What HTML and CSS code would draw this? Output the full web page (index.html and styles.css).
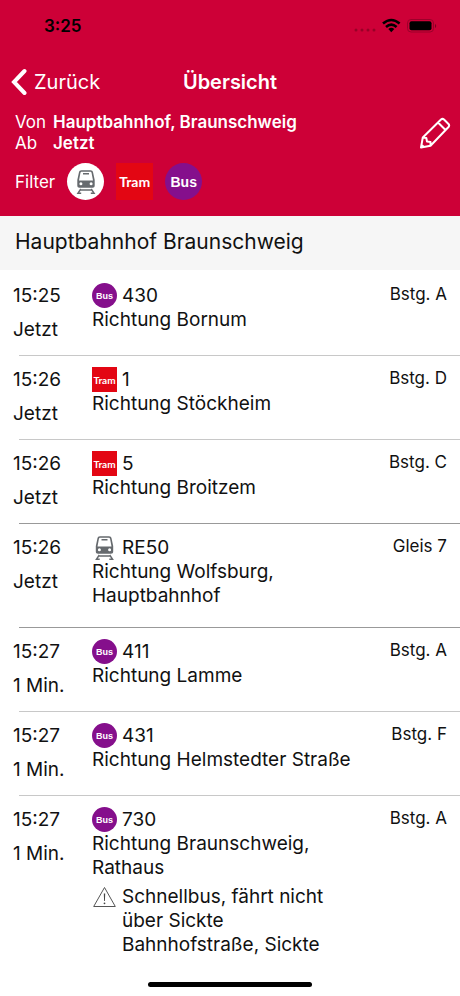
FILE: index.html
```html
<!DOCTYPE html>
<html lang="de">
<head>
<meta charset="utf-8">
<meta name="viewport" content="width=device-width, initial-scale=1">
<title>Übersicht</title>
<link rel="stylesheet" href="styles.css">
</head>
<body>
<svg class="defs" aria-hidden="true">
  <symbol id="train" viewBox="0 0 24 24">
    <path fill="#666a6e" fill-rule="evenodd" d="M7.500.3h9c1.500 0 2.300.8 2.600 2.200L20.700 10v5.500c0 1.500-.8 2.200-2.200 2.200h-13c-1.400 0-2.200-.7-2.200-2.200V10L4.900 2.500C5.200 1.100 6 .3 7.500.3zM7.900 1.700c-.9 0-1.300.4-1.500 1.300L5 10.600h14L17.600 3c-.2-.9-.6-1.300-1.500-1.300zM6.900 12.300a1.500 1.500 0 1 0 0 3 1.500 1.500 0 0 0 0-3zm10.200 0a1.500 1.500 0 1 0 0 3 1.500 1.500 0 0 0 0-3z"/>
    <path fill="none" stroke="#666a6e" stroke-width="1.500" d="M9 3.800h6M6 20h12M6.800 19 4 23.200h3.200M17.200 19l2.800 4.200h-3.200"/>
  </symbol>
</svg>
<header class="top">
  <div class="status">
    <span class="clock">3:25</span>
    <svg class="signal" viewBox="0 0 82 16" aria-hidden="true">
      <g fill="#980027"><circle cx="2" cy="12" r="1.500"/><circle cx="8" cy="12" r="1.500"/><circle cx="14" cy="12" r="1.500"/><circle cx="20" cy="12" r="1.500"/></g>
      <g fill="none" stroke="#000" stroke-width="2.600"><path d="M29 5.500Q37.300-1.500 45.600 5.500M32 8.900Q37.300 4.300 42.600 8.900"/></g>
      <path d="M34.300 10.900q3-2.200 6 0l-3 3.300z"/>
      <rect x="53.500" y="1.500" width="26" height="12.500" rx="3.500" fill="none" stroke="#9c002a"/>
      <rect x="55.500" y="3.300" width="22" height="9" rx="2"/>
      <path d="M81 6v4q1.200-.6 1.200-2T81 6z" fill="#7c0021"/>
    </svg>
  </div>
  <nav class="nav">
    <button class="back" type="button">
      <svg viewBox="0 0 16 28" aria-hidden="true"><path d="M13.500 3 3 14l10.500 11" fill="none" stroke="#fff" stroke-width="4" stroke-linecap="round" stroke-linejoin="miter"/></svg>
      Zurück
    </button>
    <h1>Übersicht</h1>
  </nav>
  <div class="query">
    <dl>
      <dt>Von</dt><dd>Hauptbahnhof, Braunschweig</dd>
      <dt>Ab</dt><dd>Jetzt</dd>
    </dl>
    <button class="edit" type="button" aria-label="Bearbeiten">
      <svg viewBox="0 0 32 32" aria-hidden="true"><path d="M2 30.500 3.800 20.500 22 2.500q1.500-1.300 3 0l4.500 4.500q1.300 1.500 0 3L11.500 28.800zM3.800 20.500l3.500.5.700 3.500 3.500.5v3.500M19 5.500l7.500 7.500M2.300 27.500l2.500 2.500" fill="none" stroke="#fff" stroke-width="2" stroke-linejoin="round"/></svg>
    </button>
  </div>
  <div class="filter">
    <span>Filter</span>
    <button class="chip train" type="button" aria-label="Zug"><svg viewBox="0 0 24 24" aria-hidden="true"><use href="#train"/></svg></button>
    <button class="chip tram" type="button">Tram</button>
    <button class="chip bus" type="button">Bus</button>
  </div>
</header>
<main>
  <h2>Hauptbahnhof Braunschweig</h2>
  <ul class="list">
    <li>
      <div class="time"><time>15:25</time><span>Jetzt</span></div>
      <div class="trip"><div class="line"><b class="badge bus">Bus</b>430</div><p>Richtung Bornum</p></div>
      <span class="stop">Bstg. A</span>
    </li>
    <li>
      <div class="time"><time>15:26</time><span>Jetzt</span></div>
      <div class="trip"><div class="line"><b class="badge tram">Tram</b>1</div><p>Richtung Stöckheim</p></div>
      <span class="stop">Bstg. D</span>
    </li>
    <li>
      <div class="time"><time>15:26</time><span>Jetzt</span></div>
      <div class="trip"><div class="line"><b class="badge tram">Tram</b>5</div><p>Richtung Broitzem</p></div>
      <span class="stop">Bstg. C</span>
    </li>
    <li class="strong">
      <div class="time"><time>15:26</time><span>Jetzt</span></div>
      <div class="trip"><div class="line"><svg class="badge" viewBox="0 0 24 24" aria-hidden="true"><use href="#train"/></svg>RE50</div><p>Richtung Wolfsburg,<br>Hauptbahnhof</p></div>
      <span class="stop">Gleis 7</span>
    </li>
    <li class="strong">
      <div class="time"><time>15:27</time><span>1 Min.</span></div>
      <div class="trip"><div class="line"><b class="badge bus">Bus</b>411</div><p>Richtung Lamme</p></div>
      <span class="stop">Bstg. A</span>
    </li>
    <li>
      <div class="time"><time>15:27</time><span>1 Min.</span></div>
      <div class="trip"><div class="line"><b class="badge bus">Bus</b>431</div><p>Richtung Helmstedter Straße</p></div>
      <span class="stop">Bstg. F</span>
    </li>
    <li>
      <div class="time"><time>15:27</time><span>1 Min.</span></div>
      <div class="trip">
        <div class="line"><b class="badge bus">Bus</b>730</div>
        <p>Richtung Braunschweig,<br>Rathaus</p>
        <div class="note">
          <svg class="badge" viewBox="0 0 24 24" aria-hidden="true"><path d="M12 2.500 22.800 21.500H1.200z" fill="none" stroke="#555"/><path d="M11.300 8.500h1.400l-.3 7.500h-.8z" fill="#444"/><circle cx="12" cy="18.300" r=".9" fill="#444"/></svg>
          <p>Schnellbus, fährt nicht<br>über Sickte<br>Bahnhofstraße, Sickte</p>
        </div>
      </div>
      <span class="stop">Bstg. A</span>
    </li>
  </ul>
</main>
<div class="home"></div>
</body>
</html>
```
FILE: styles.css
```css
* { box-sizing: border-box; }

body {
  margin: 0;
  min-height: 100vh;
  display: flex;
  flex-direction: column;
  background: #fff;
  color: #111;
  font: 19px/24px Inter, "Liberation Sans", sans-serif;
}

h1, h2, p, ul, dl, dd { margin: 0; padding: 0; }

button {
  border: 0;
  padding: 0;
  background: none;
  color: inherit;
  font: inherit;
}

.defs { position: absolute; width: 0; height: 0; }

.top {
  background: #cd0037;
  color: #fff;
  padding-bottom: 16px;
}

.status {
  display: flex;
  justify-content: space-between;
  align-items: center;
  height: 52px;
  padding: 0 24px 0 44px;
}

.clock {
  color: #000;
  font-size: 17px;
  font-weight: 600;
}

.signal { width: 82px; height: 16px; overflow: visible; }

.nav {
  display: grid;
  grid-template-columns: 1fr auto 1fr;
  align-items: center;
  height: 60px;
  padding: 0 11px;
}

.back {
  display: flex;
  align-items: center;
  justify-self: start;
  gap: 7px;
  font-size: 20px;
}

.back svg { width: 16px; height: 28px; }

h1 { font-size: 20px; font-weight: 600; }

.query {
  display: flex;
  justify-content: space-between;
  align-items: center;
  padding: 0 9px 0 15px;
}

.query dl {
  display: grid;
  grid-template-columns: 38px auto;
  font-size: 17px;
  line-height: 21px;
}

.query dd { font-weight: 600; }

.edit svg { display: block; width: 32px; height: 32px; }

.filter {
  display: flex;
  align-items: center;
  gap: 12px;
  margin-top: 9px;
  padding-left: 15px;
  font-size: 17px;
}

.chip {
  display: grid;
  place-items: center;
  width: 37px;
  height: 37px;
  font-size: 14px;
  font-weight: 700;
}

.chip.train { border-radius: 50%; background: #fff; }
.chip svg { width: 24px; height: 24px; }

.tram {
  background: #e30613;
  color: #fff;
  font-family: Lato, "Noto Sans", sans-serif;
}

.bus {
  border-radius: 50%;
  background: #850f8c;
  color: #fff;
  font-family: "Liberation Sans", sans-serif;
}

h2 {
  padding: 14px 15px 16px;
  background: #f6f6f6;
  font-size: 21px;
  font-weight: 400;
}

.list { list-style: none; padding-top: 1px; }

.list li {
  display: grid;
  grid-template-columns: 79px 1fr auto;
  position: relative;
  min-height: 84px;
  padding: 13px 13px 19px;
}

.list li + li::before {
  content: "";
  position: absolute;
  inset: 0 0 auto 19px;
  height: 1px;
  background: #c8c8c8;
}

.list li.strong::before { background: #999; }

.time {
  display: flex;
  flex-direction: column;
  gap: 10px;
  height: 48px;
}

.line {
  display: flex;
  align-items: center;
  gap: 5px;
}

.badge {
  display: grid;
  place-items: center;
  flex: none;
  width: 25px;
  height: 24px;
  font-size: 9px;
  line-height: 24px;
}

b.badge { height: 25px; margin: -1px 0 0; }
.badge.tram { font-size: 10px; }

.trip p { line-height: 24px; }

.note {
  display: flex;
  gap: 5px;
  margin-top: 5px;
}

.stop { font-size: 17px; line-height: 21px; }

.home {
  width: 164px;
  height: 5px;
  margin: auto auto 9px;
  border-radius: 3px;
  background: #000;
}
```
